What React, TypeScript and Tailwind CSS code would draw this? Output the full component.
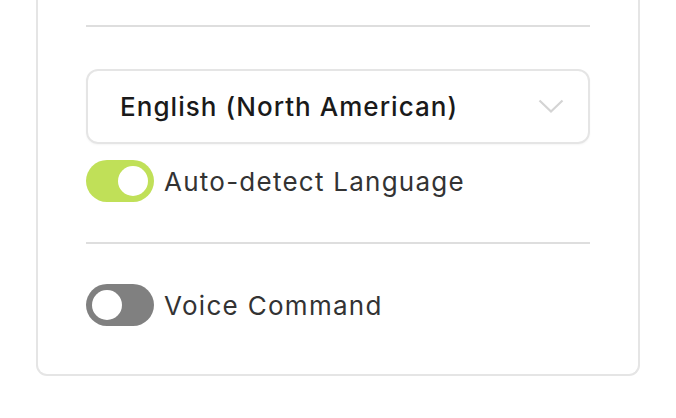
import { useState } from 'react';

function Toggle({ on, onChange }: { on: boolean; onChange: () => void }) {
  return (
    <button
      onClick={onChange}
      className={`flex h-[42px] w-[68px] shrink-0 items-center rounded-full px-[6px] ${
        on ? 'justify-end bg-[#c0e058]' : 'justify-start bg-[#808080]'
      }`}
    >
      <span className="block h-[30px] w-[30px] rounded-full bg-white" />
    </button>
  );
}

export default function App() {
  const [autoDetect, setAutoDetect] = useState(true);
  const [voice, setVoice] = useState(false);

  return (
    <div className="h-[418px] w-[676px] bg-white" style={{ fontFamily: 'Inter, "Noto Sans", sans-serif' }}>
      <div className="ml-[36px] w-[604px] rounded-b-[11px] border-x-2 border-b-2 border-[#e5e5e5] px-[48px] pb-[48px] pt-[25px]">
        <div className="h-[2px] bg-[#dedede]" />

        {/* Language select */}
        <div className="mt-[42px] flex h-[75px] items-center justify-between rounded-[12px] border-2 border-[#e5e5e5] pl-[32px] pr-[24px] shadow-[0_1px_2px_rgba(0,0,0,0.04)]">
          <span className="text-[26px] font-medium tracking-[0.04em] text-[#1a1a1a]">English (North American)</span>
          <svg width="26" height="15" viewBox="0 0 26 15" fill="none">
            <path d="M1.5 1.5 L13 12.5 L24.5 1.5" stroke="#d4d4d4" strokeWidth="2.2" />
          </svg>
        </div>

        <div className="mt-[16px] flex items-center gap-[10px]">
          <Toggle on={autoDetect} onChange={() => setAutoDetect(!autoDetect)} />
          <span className="text-[26px] tracking-[0.048em] text-[#333333]">Auto-detect Language</span>
        </div>

        <div className="mt-[40px] h-[2px] bg-[#dedede]" />

        <div className="mt-[40px] flex items-center gap-[10px]">
          <Toggle on={voice} onChange={() => setVoice(!voice)} />
          <span className="text-[26px] tracking-[0.05em] text-[#333333]">Voice Command</span>
        </div>
      </div>
    </div>
  );
}
